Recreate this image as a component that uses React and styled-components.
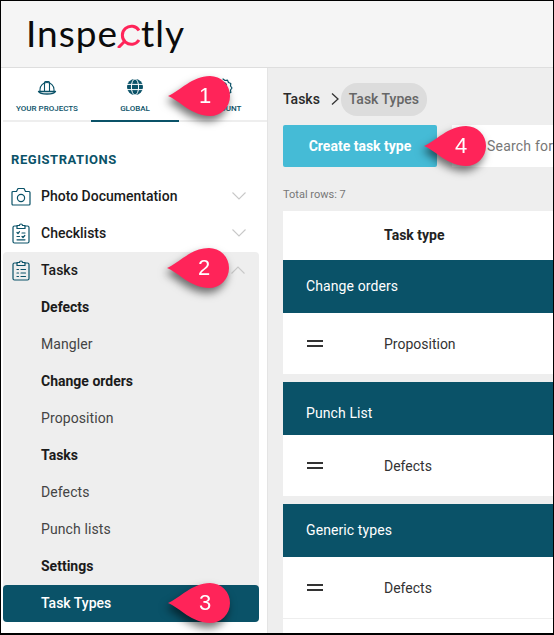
import React from 'react';
import styled, { createGlobalStyle } from 'styled-components';

const teal = '#0a5268';

const GlobalStyle = createGlobalStyle`
  html, body {
    margin: 0;
    padding: 0;
    background: #000;
  }
  * {
    box-sizing: border-box;
  }
`;

const Frame = styled.div`
  position: relative;
  width: 554px;
  height: 635px;
  border-style: solid;
  border-color: #000;
  border-width: 1px 1px 2px 1px;
  background: #fff;
  overflow: hidden;
  font-family: Roboto, sans-serif;
  display: flex;
  flex-direction: column;
`;

const Header = styled.header`
  flex: 0 0 67px;
  background: #f5f5f5;
  border-bottom: 1px solid #dedede;
  display: flex;
  align-items: center;
  padding: 0 0 4px 25px;
`;

const Logo = styled.div`
  display: flex;
  align-items: baseline;
  font-family: Lato, sans-serif;
  font-size: 37px;
  line-height: 1;
  letter-spacing: 1px;
  color: #0b0b0b;
  svg {
    align-self: center;
    margin: 7px 0 0 -1px;
  }
`;

const Body = styled.div`
  flex: 1;
  display: flex;
  min-height: 0;
`;

const Sidebar = styled.aside`
  flex: 0 0 266px;
  background: #fff;
  border-right: 1px solid #e4e4e4;
  display: flex;
  flex-direction: column;
`;

const Tabs = styled.nav`
  display: flex;
  height: 54px;
  margin-left: 2px;
  border-bottom: 2px solid #eeeeee;
`;

const Tab = styled.div`
  flex: 0 0 88px;
  margin-bottom: -2px;
  height: 54px;
  display: flex;
  flex-direction: column;
  align-items: center;
  padding-top: 9px;
  gap: 7px;
  font-size: 8px;
  font-weight: 500;
  color: ${teal};
  border-bottom: 2px solid ${(p) => (p.$active ? teal : 'transparent')};
  svg {
    flex: 0 0 20px;
  }
`;

const SectionTitle = styled.h3`
  margin: 30px 0 0 10px;
  font-size: 13px;
  line-height: 15px;
  font-weight: 700;
  letter-spacing: 0.55px;
  color: ${teal};
`;

const MenuRow = styled.div`
  height: 37px;
  display: flex;
  align-items: center;
  padding-left: ${(p) => (p.$sub ? '38px' : p.$grouped ? '7px' : '9px')};
  padding-right: ${(p) => (p.$grouped ? '14px' : '21px')};
  padding-bottom: 1px;
  font-size: 14px;
  font-weight: ${(p) => (p.$bold ? 700 : p.$sub && !p.$active ? 400 : 500)};
  letter-spacing: ${(p) => (p.$sub && !p.$bold && !p.$active ? '0.1px' : 0)};
  color: ${(p) => (p.$active ? '#fff' : p.$sub && !p.$bold ? '#444' : '#1b1b1b')};
  background: ${(p) => (p.$active ? teal : 'transparent')};
  border-radius: ${(p) => (p.$active ? '4px' : '0')};
`;

const RowIcon = styled.span`
  flex: 0 0 22px;
  height: 24px;
  margin-right: 9px;
  display: flex;
  align-items: center;
  justify-content: center;
`;

const RowLabel = styled.span`
  flex: 1;
`;

const Menu = styled.div`
  margin-top: 11px;
  display: flex;
  flex-direction: column;
`;

const MenuGroup = styled.div`
  width: 256px;
  margin-left: 2px;
  background: #eeeeee;
  border-radius: 4px;
`;

const Main = styled.main`
  flex: 1;
  min-width: 0;
  background: #eeeeee;
  padding: 15px 0 0 15px;
  overflow: hidden;
`;

const Breadcrumb = styled.div`
  display: flex;
  align-items: center;
  height: 32px;
  font-size: 14px;
  font-weight: 500;
  color: #2a2a2a;
  svg {
    margin: 0 1px 0 10px;
  }
`;

const Crumb = styled.span`
  background: #dcdcdc;
  color: #666;
  width: 86px;
  height: 33px;
  display: flex;
  align-items: center;
  justify-content: center;
  border-radius: 16px;
`;

const Toolbar = styled.div`
  display: flex;
  gap: 15px;
  margin-top: 10px;
  height: 42px;
`;

const CreateButton = styled.button`
  flex: 0 0 154px;
  border: 0;
  border-radius: 2px;
  background: #45bbd6;
  color: #fff;
  font-family: inherit;
  font-size: 14px;
  font-weight: 700;
`;

const Search = styled.div`
  flex: 1;
  background: #fff;
  display: flex;
  align-items: center;
  padding-left: 35px;
  font-size: 14px;
  letter-spacing: 0.2px;
  color: #777;
  white-space: nowrap;
`;

const TotalRows = styled.div`
  margin-top: 21px;
  height: 14px;
  line-height: 14px;
  font-size: 11px;
  color: #777;
`;

const Table = styled.div`
  margin-top: 9px;
  display: flex;
  flex-direction: column;
`;

const HeaderRow = styled.div`
  height: 49px;
  background: #fff;
  display: flex;
  align-items: center;
  padding-left: 101px;
  padding-bottom: 1px;
  font-size: 14px;
  font-weight: 700;
  color: #222;
`;

const GroupRow = styled.div`
  height: 53px;
  margin-top: ${(p) => (p.$first ? 0 : '8px')};
  background: ${teal};
  color: #fff;
  display: flex;
  align-items: center;
  padding-left: 23px;
  padding-top: ${(p) => p.$drop || 0}px;
  padding-bottom: 1px;
  font-size: 14px;
  font-weight: 400;
  letter-spacing: 0.1px;
`;

const DataRow = styled.div`
  height: ${(p) => (p.$divider ? '62px' : '61px')};
  background: #fff;
  display: flex;
  align-items: center;
  padding-left: 24px;
  font-size: 14px;
  color: #333;
  border-bottom: ${(p) => (p.$divider ? '1px solid #eeeeee' : 0)};
`;

const DragHandle = styled.span`
  flex: 0 0 16px;
  height: 7px;
  margin-right: 61px;
  border-top: 2px solid #333;
  border-bottom: 2px solid #333;
`;

const BlankRow = styled.div`
  height: 30px;
  background: #fff;
`;

const Callout = styled.div`
  position: absolute;
  left: ${(p) => p.$x}px;
  top: ${(p) => p.$y}px;
  width: 64px;
  height: 44px;
  filter: drop-shadow(-2px 5px 4px rgba(0, 0, 0, 0.55));
  svg {
    display: block;
  }
`;

const CalloutNumber = styled.span`
  position: absolute;
  left: 19px;
  top: 1px;
  width: 36px;
  height: 42px;
  display: flex;
  align-items: center;
  justify-content: center;
  font-family: 'Liberation Sans', sans-serif;
  font-size: 22px;
  color: #fff;
`;

const stroke = { fill: 'none', stroke: teal, strokeLinecap: 'round', strokeLinejoin: 'round' };

const HatIcon = () => (
  <svg width="20" height="20" viewBox="0 0 20 20" {...stroke} strokeWidth="1.100">
    <path d="M3 14v-1.500a7 7 0 0 1 14 0V14" />
    <path d="M7.500 14V5.600a1 1 0 0 1 1-1h3a1 1 0 0 1 1 1V14" />
    <path d="M1.500 14.500h17c-1 2-3 2.500-8.500 2.500s-7.500-.5-8.500-2.500z" strokeWidth="1.300" />
  </svg>
);

const GlobeIcon = () => (
  <svg width="20" height="20" viewBox="0 0 20 20">
    <circle cx="10" cy="10" r="8" fill={teal} />
    <g fill="none" stroke="#fff" strokeWidth="1">
      <path d="M2 7.400h16M2 12.600h16" />
      <ellipse cx="10" cy="10" rx="3.600" ry="8" />
    </g>
  </svg>
);

const AccountIcon = () => (
  <svg width="20" height="20" viewBox="0 0 20 20" {...stroke} strokeWidth="1.200">
    <path d="M10 2l2 1.500 2.500-.3 1 2.300 2.300 1-.3 2.500 1.500 2-1.500 2 .3 2.500-2.300 1" />
    <circle cx="10" cy="9" r="3.500" />
  </svg>
);

const CameraIcon = () => (
  <svg width="22" height="22" viewBox="0 0 22 22" {...stroke} strokeWidth="1.200">
    <path d="M3 6.500h3.500l1.500-3h6l1.500 3H19a1 1 0 0 1 1 1V19a1 1 0 0 1-1 1H3a1 1 0 0 1-1-1V7.500a1 1 0 0 1 1-1z" />
    <circle cx="11" cy="13" r="3.600" />
  </svg>
);

const ClipboardIcon = ({ checks }) => (
  <svg width="20" height="24" viewBox="0 0 20 24" {...stroke} strokeWidth="1.200">
    <path d="M6 5H3.500A1.500 1.500 0 0 0 2 6.500v14A1.500 1.500 0 0 0 3.500 22h13a1.500 1.500 0 0 0 1.500-1.500v-14A1.500 1.500 0 0 0 16.500 5H14" />
    <path d="M6 7.500v-3h2.500a1.500 1.500 0 0 1 3 0H14v3z" />
    {checks ? (
      <path d="M6 11.500l1 1 1.500-1.800M11 12h3M6 15.500h2.500M11 15.500l1 1 1.800-2M6 18.800h8" />
    ) : (
      <path d="M6 11.500h1.500M10 11.500h4.500M6 15h1.500M10 15h4.500M6 18.500h1.500M10 18.500h4.500" />
    )}
  </svg>
);

const Chevron = ({ up }) => (
  <svg width="14" height="8" viewBox="0 0 14 8" fill="none" stroke="#c8c8c8" strokeWidth="1.100">
    <path d={up ? 'M.5 7.500L7 1l6.500 6.500' : 'M.5.5L7 7 13.500.5'} />
  </svg>
);

// the "c" of the wordmark is a magnifying glass
const LensC = () => (
  <svg width="24" height="24" viewBox="0 0 24 24" fill="none" stroke="#ff2459" strokeWidth="3">
    <path d="M22 6.500a9 9 0 1 0 0 9.500" />
    <path d="M7 18L2 23" strokeLinecap="round" />
  </svg>
);

const Pin = ({ x, y, n }) => (
  <Callout $x={x} $y={y}>
    <svg width="64" height="44" viewBox="0 0 64 44">
      <path d="M0 22C12 17 24 2 42 2a20 20 0 0 1 0 40C24 42 12 27 0 22z" fill="#ff2459" />
    </svg>
    <CalloutNumber>{n}</CalloutNumber>
  </Callout>
);

const subItems = [
  ['Defects', true],
  ['Mangler', false],
  ['Change orders', true],
  ['Proposition', false],
  ['Tasks', true],
  ['Defects', false],
  ['Punch lists', false],
  ['Settings', true],
];

const groups = [
  ['Change orders', 'Proposition', 0],
  ['Punch List', 'Defects', 10],
  ['Generic types', 'Defects', 0],
];

export default function App() {
  return (
    <Frame>
      <GlobalStyle />
      <Header>
        <Logo>
          Inspe
          <LensC />
          tly
        </Logo>
      </Header>
      <Body>
        <Sidebar>
          <Tabs>
            <Tab>
              <HatIcon />
              YOUR PROJECTS
            </Tab>
            <Tab $active>
              <GlobeIcon />
              GLOBAL
            </Tab>
            <Tab>
              <AccountIcon />
              ACCOUNT
            </Tab>
          </Tabs>
          <SectionTitle>REGISTRATIONS</SectionTitle>
          <Menu>
            <MenuRow>
              <RowIcon><CameraIcon /></RowIcon>
              <RowLabel>Photo Documentation</RowLabel>
              <Chevron />
            </MenuRow>
            <MenuRow>
              <RowIcon><ClipboardIcon checks /></RowIcon>
              <RowLabel>Checklists</RowLabel>
              <Chevron />
            </MenuRow>
            <MenuGroup>
              <MenuRow $grouped>
                <RowIcon><ClipboardIcon /></RowIcon>
                <RowLabel>Tasks</RowLabel>
                <Chevron up />
              </MenuRow>
              {subItems.map(([label, bold], i) => (
                <MenuRow key={i} $sub $bold={bold}>{label}</MenuRow>
              ))}
              <MenuRow $sub $active>Task Types</MenuRow>
            </MenuGroup>
          </Menu>
        </Sidebar>
        <Main>
          <Breadcrumb>
            Tasks
            <svg width="10" height="14" viewBox="0 0 10 14" fill="none" stroke="#333" strokeWidth="1.300">
              <path d="M2 1.500L8 7l-6 5.500" />
            </svg>
            <Crumb>Task Types</Crumb>
          </Breadcrumb>
          <Toolbar>
            <CreateButton>Create task type</CreateButton>
            <Search>Search for</Search>
          </Toolbar>
          <TotalRows>Total rows: 7</TotalRows>
          <Table>
            <HeaderRow>Task type</HeaderRow>
            {groups.map(([group, item, drop], i) => (
              <React.Fragment key={group}>
                <GroupRow $first={i === 0} $drop={drop}>{group}</GroupRow>
                <DataRow $divider={i === 2}>
                  <DragHandle />
                  {item}
                </DataRow>
              </React.Fragment>
            ))}
            <BlankRow />
          </Table>
        </Main>
      </Body>
      <Pin x={167} y={73} n={1} />
      <Pin x={166} y={245} n={2} />
      <Pin x={167} y={580} n={3} />
      <Pin x={423} y={123} n={4} />
    </Frame>
  );
}
